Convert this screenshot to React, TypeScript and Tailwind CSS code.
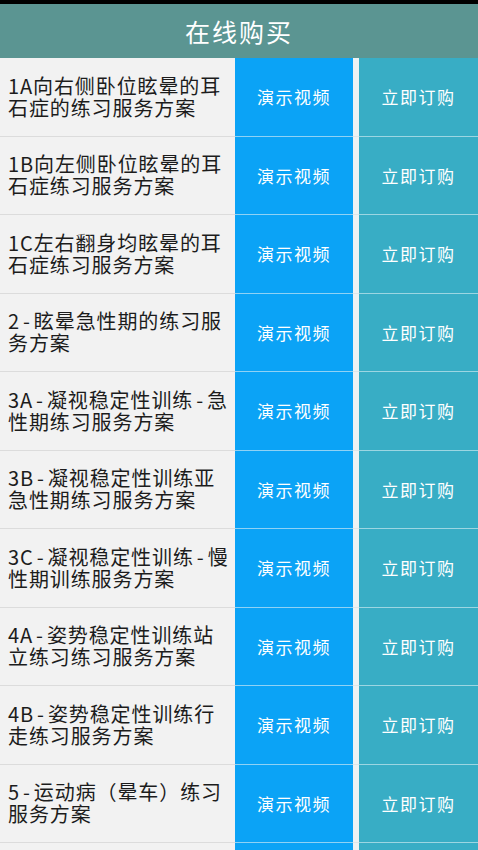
import React from "react";

const rows: [string, string][] = [
  ["1A向右侧卧位眩晕的耳", "石症的练习服务方案"],
  ["1B向左侧卧位眩晕的耳", "石症练习服务方案"],
  ["1C左右翻身均眩晕的耳", "石症练习服务方案"],
  ["2-眩晕急性期的练习服", "务方案"],
  ["3A-凝视稳定性训练-急", "性期练习服务方案"],
  ["3B-凝视稳定性训练亚", "急性期练习服务方案"],
  ["3C-凝视稳定性训练-慢", "性期训练服务方案"],
  ["4A-姿势稳定性训练站", "立练习练习服务方案"],
  ["4B-姿势稳定性训练行", "走练习服务方案"],
  ["5-运动病（晕车）练习", "服务方案"],
  ["6-平衡功能训练服务方", "案"],
];

function Line({ text }: { text: string }) {
  const parts = text.split("-");
  return (
    <span className="block whitespace-nowrap">
      {parts.map((p, i) => (
        <React.Fragment key={i}>
          {i > 0 && <span className="px-[3px]">-</span>}
          {p}
        </React.Fragment>
      ))}
    </span>
  );
}

export default function App() {
  return (
    <div
      className="w-[478px] h-[850px] overflow-hidden bg-[#eef2f3] flex flex-col"
      style={{ fontFamily: '"Noto Sans CJK SC", "Noto Sans", sans-serif' }}
    >
      <div className="h-[4px] bg-black shrink-0" />
      <div className="h-[54px] shrink-0 bg-[#5b9592] flex items-center justify-center">
        <span className="text-white text-[25px] tracking-[2px] leading-none">在线购买</span>
      </div>
      <div className="flex flex-col">
        {rows.map((r, i) => (
          <div key={i} className="flex h-[78.5px] shrink-0">
            <div className="w-[235px] bg-[#f2f2f2] border-b-[1.5px] border-[#dcdcdc] flex items-center pl-[8px]">
              <div className="text-[20px] leading-[22px] tracking-[0.9px] text-[#1c1c1c]">
                <Line text={r[0]} />
                <Line text={r[1]} />
              </div>
            </div>
            <div className="w-[118px] bg-[#0ba3f6] border-b-[1.5px] border-[#8fd2f5] flex items-center justify-center">
              <span className="text-white text-[17px] tracking-[1.5px] leading-none">演示视频</span>
            </div>
            <div className="w-[6px] bg-[#eef2f3] border-b-[1.5px] border-[#dfe6e8]" />
            <div className="w-[119px] bg-[#38adc5] border-b-[1.5px] border-[#9cd6e2] flex items-center justify-center">
              <span className="text-white text-[17px] tracking-[1.5px] leading-none">立即订购</span>
            </div>
          </div>
        ))}
      </div>
    </div>
  );
}
